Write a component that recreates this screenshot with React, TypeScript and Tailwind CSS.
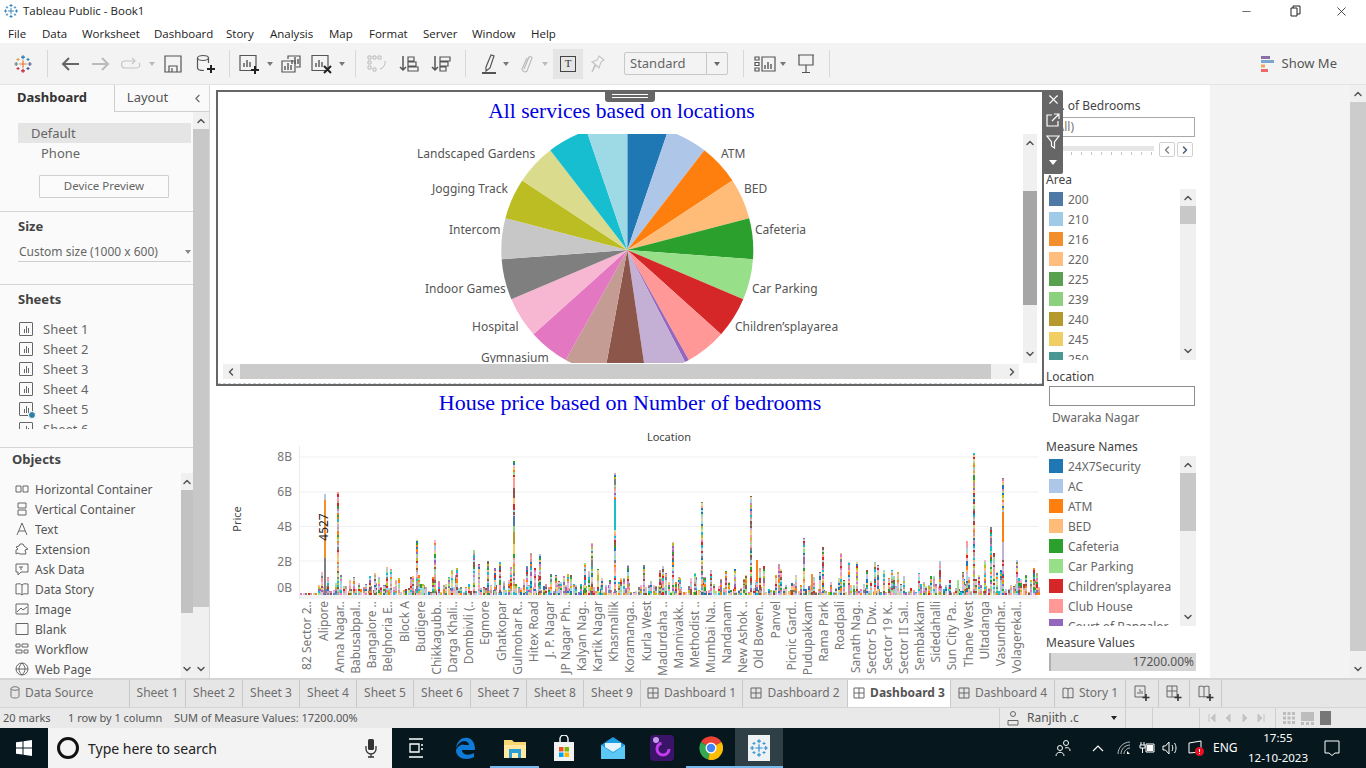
import React from "react";
import { ChevronUp, ChevronDown, ChevronLeft, ChevronRight, X, Minus } from "lucide-react";

const T20 = ["#1f77b4","#aec7e8","#ff7f0e","#ffbb78","#2ca02c","#98df8a","#d62728","#ff9896","#9467bd","#c5b0d5","#8c564b","#c49c94","#e377c2","#f7b6d2","#7f7f7f","#c7c7c7","#bcbd22","#dbdb8d","#17becf","#9edae5"];

function wedge(cx:number,cy:number,r:number,a0:number,a1:number){
  const p=(a:number)=>[cx+r*Math.sin(a*Math.PI/180),cy-r*Math.cos(a*Math.PI/180)];
  const [x0,y0]=p(a0),[x1,y1]=p(a1);
  return `M${cx} ${cy}L${x0} ${y0}A${r} ${r} 0 0 1 ${x1} ${y1}Z`;
}

function Pie(){
  let a=0; const big=(360-2)/19;
  const labels:[string,number,number][]=[["Landscaped Gardens",417,158],["ATM",721,158],["Jogging Track",432,193],["BED",744,193],["Intercom",449,234],["Cafeteria",755,234],["Indoor Games",425,293],["Car Parking",752,293],["Hospital",472,331],["Children’splayarea",735,331],["Gymnasium",481,362]];
  return (
    <svg width={805} height={229} viewBox="218 134 805 229" className="block shrink-0">
      {T20.map((c,i)=>{const d=i===8?2:big;const el=<path key={i} d={wedge(627.3,250,126,a,a+d)} fill={c}/>;a+=d;return el;})}
      {labels.map(([t,x,y])=><text key={t} x={x} y={y} fontSize={12} fill="#555" fontFamily="Noto Sans, sans-serif">{t}</text>)}
    </svg>
  );
}

const PEAKS:[number,number][]=[[324,494],[337,492],[321,572],[327,577],[340,575],[349,580],[369,576],[374,573],[386,567],[390,569],[395,580],[412,576],[416,540],[422,584],[434,540],[432,577],[451,570],[456,568],[473,550],[478,564],[487,561],[494,568],[499,562],[503,581],[510,567],[513,461],[526,566],[530,553],[534,568],[539,554],[550,574],[556,583],[567,574],[570,575],[584,563],[588,571],[591,543],[597,569],[601,578],[609,580],[614,473],[623,578],[627,565],[643,565],[659,570],[662,566],[665,573],[672,542],[679,578],[690,582],[694,573],[701,502],[704,577],[710,570],[725,571],[728,582],[734,569],[743,585],[750,496],[756,560],[759,568],[763,566],[778,564],[780,569],[785,585],[791,583],[803,538],[811,574],[819,572],[822,547],[840,553],[848,562],[856,562],[866,570],[874,562],[877,565],[883,570],[891,570],[897,572],[918,573],[923,582],[939,561],[949,580],[957,580],[962,572],[966,541],[973,453],[978,575],[984,560],[990,527],[993,553],[996,572],[1000,570],[1002,478],[1016,560],[1018,578],[1025,575],[1033,568],[1036,573]];

function buildBars(){
  let s=12345; const r=()=>{s=(s*1103515245+12345)&0x7fffffff;return s/0x7fffffff;};
  const rects:{x:number,y:number,h:number,c:string}[]=[];
  const BASE=594.5;
  const bar=(x:number,top:number)=>{
    let y=BASE;
    while(y>top){
      const h=Math.min(y-top,r()<0.2?3:2);
      rects.push({x,y:y-h,h,c:T20[Math.floor(r()*20)]});
      y-=h;
    }
  };
  for(let i=0;i<296;i++){
    const x=Math.round(300+i*2.5);
    const rr=r();
    if(x<318){bar(x,BASE-1.5);continue;}
    const h=rr<0.25?2+r()*2:rr<0.75?4+r()*7:9+r()*11;
    bar(x,BASE-h);
  }
  PEAKS.forEach(([x,t])=>bar(x,t));
  // long single-colour runs that stand out in the tall marks
  rects.push({x:324,y:500,h:58,c:"#f28e2b"},{x:324,y:558,h:36,c:"#7f7f7f"},{x:756,y:560,h:22,c:"#ff7f0e"},{x:811,y:574,h:16,c:"#f28e2b"},{x:1002,y:512,h:30,c:"#ff7f0e"},{x:1002,y:542,h:18,c:"#c5b0d5"},{x:957,y:580,h:14,c:"#98df8a"},{x:614,y:500,h:30,c:"#17becf"},{x:513,y:478,h:10,c:"#ff9896"},{x:513,y:488,h:10,c:"#8c564b"},{x:513,y:498,h:6,c:"#ffbb78"},{x:513,y:504,h:6,c:"#d62728"},{x:513,y:516,h:10,c:"#4e79a7"},{x:513,y:526,h:6,c:"#8cd17d"},{x:513,y:532,h:12,c:"#b6992d"},{x:513,y:544,h:10,c:"#f1ce63"});
  return rects;
}
const BARS=buildBars();

const AXIS:[string,number][]=[["82 Sector 2..",307],["Alipore",324],["Anna Nagar..",340],["Babusabpal..",356],["Bangalore ..",372],["Belghoria E..",388],["Block A",405],["Budigere",421],["Chikkagubb..",437],["Darga Khali..",453],["Dombivli (..",469],["Egmore",485],["Ghatkopar",502],["Gulmohar R..",518],["Hitex Road",534],["J. P. Nagar",550],["JP Nagar Ph..",566],["Kalyan Nag..",582],["Kartik Nagar",598],["Khasmallik",614],["Koramanga..",630],["Kurla West",647],["Madurdaha ..",663],["Mannivakk..",679],["Methodist ..",695],["Mumbai Na..",711],["Nandanam",727],["New Ashok ..",743],["Old Bowen..",759],["Panvel",776],["Picnic Gard..",792],["Pudupakkam",808],["Rama Park",824],["Roadpali",840],["Sanath Nag..",856],["Sector 5 Dw..",872],["Sector 19 K..",888],["Sector II Sal..",904],["Sembakkam",920],["Sidedahalli",936],["Sun City Pa..",952],["Thane West",969],["Ultadanga",985],["Vasundhar..",1001],["Volagerekal..",1017]];

function BarChart(){
  const F="Noto Sans, sans-serif";
  return (
    <svg width={828} height={258} viewBox="216 420 828 258" className="block">
      <text x={669} y={441} textAnchor="middle" fontSize={11} fill="#444" fontFamily={F}>Location</text>
      <rect x={299} y={595} width={739} height={4} fill="#f2f2f2"/>
      <rect x={299} y={446} width={1} height={153} fill="#ececec"/>
      {[456.5,491.5,526,560.5].map(y=><rect key={y} x={299} y={y} width={739} height={1} fill="#efefef"/>)}
      {[["8B",461],["6B",496],["4B",531],["2B",566],["0B",592]].map(([t,y])=><text key={t} x={292} y={y} textAnchor="end" fontSize={12} fill="#777" fontFamily={F}>{t}</text>)}
      <text transform="translate(241 519) rotate(-90)" textAnchor="middle" fontSize={11} fill="#444" fontFamily={F}>Price</text>
      {BARS.map((b,i)=><rect key={i} x={b.x} y={b.y} width={2} height={b.h} fill={b.c} shapeRendering="crispEdges"/>)}
      <text transform="translate(328 527) rotate(-90)" textAnchor="middle" fontSize={12} fill="#222" fontFamily={F}>4527</text>
      {AXIS.map(([t,x])=><text key={t} transform={`translate(${x+4} 601) rotate(-90)`} textAnchor="end" fontSize={12} fill="#777" fontFamily={F}>{t}</text>)}
    </svg>
  );
}

/* ---------- icons ---------- */
function TabLogo({size=22,mono}:{size?:number,mono?:string}){
  const cs=mono?[mono,mono,mono,mono,mono,mono,mono]:["#e8762c","#1f77b4","#c72035","#59879b","#5b6591","#eb912b","#1f447e"];
  const P=({x,y,r,c,w=1.3}:{x:number,y:number,r:number,c:string,w?:number})=><path d={`M${x-r} ${y}H${x+r}M${x} ${y-r}V${y+r}`} stroke={c} strokeWidth={w}/>;
  return <svg width={size} height={size} viewBox="0 0 22 22" className="shrink-0">
    <P x={11} y={11} r={4} c={cs[0]}/><P x={11} y={3.5} r={2.2} c={cs[1]}/><P x={11} y={18.5} r={2.2} c={cs[2]}/><P x={3.5} y={11} r={2.2} c={cs[3]}/><P x={18.5} y={11} r={2.2} c={cs[4]}/>
    <P x={5.5} y={6} r={1.7} c={cs[5]} w={1}/><P x={16.5} y={6} r={1.7} c={cs[1]} w={1}/><P x={5.5} y={16} r={1.7} c={cs[2]} w={1}/><P x={16.5} y={16} r={1.7} c={cs[6]} w={1}/>
  </svg>;
}
function Caret({cls="ml-0",c="#777"}:{cls?:string,c?:string}){return <svg width={6} height={4} viewBox="0 0 6 4" className={`shrink-0 ${cls}`}><path d="M0 0H6L3 4Z" fill={c}/></svg>;}
function Div({cls}:{cls:string}){return <div className={`w-px h-[27px] bg-[#d8d8d8] shrink-0 ${cls}`}/>;}
const S={fill:"none",stroke:"#555",strokeWidth:1.2};
function BarsMini({x,y}:{x:number,y:number}){return <path d={`M${x} ${y}v-4M${x+3} ${y}v-7M${x+6} ${y}v-5`} fill="none" stroke="#555" strokeWidth={1.4}/>;}
function I({w,h,cls,children}:{w:number,h:number,cls:string,children:React.ReactNode}){return <svg width={w} height={h} viewBox={`0 0 ${w} ${h}`} className={`shrink-0 ${cls}`}>{children}</svg>;}

function Toolbar(){
  return (
  <div className="h-[41px] bg-[#f3f3f3] flex items-center shrink-0 text-[#555]">
    <span className="ml-[13px] flex"><TabLogo size={20}/></span>
    <Div cls="ml-[14px]"/>
    <I w={20} h={16} cls="ml-[12px]"><path d="M19 8H3M9 2L3 8l6 6" fill="none" stroke="#666" strokeWidth={2}/></I>
    <I w={20} h={16} cls="ml-[11px]"><path d="M1 8h16M11 2l6 6-6 6" fill="none" stroke="#bbb" strokeWidth={2}/></I>
    <I w={22} h={14} cls="ml-[9px]"><path d="M14 4H5a3 3 0 0 0 0 7h12a3 3 0 0 0 2-5" fill="none" stroke="#c4c4c4" strokeWidth={1.2}/><path d="M12 1l3 3-3 3" fill="none" stroke="#c4c4c4" strokeWidth={1.2}/></I>
    <Caret cls="ml-[7px]" c="#bbb"/>
    <I w={18} h={18} cls="ml-[9px]"><path d="M1 1H17V17H1ZM5 17V11H13V17M8 13V17" {...S}/></I>
    <I w={20} h={20} cls="ml-[14px]"><ellipse cx={7} cy={4} rx={5.5} ry={2.5} {...S}/><path d="M1.5 4V14C1.5 15.5 4 16.5 8 16.5M12.5 4V9" {...S}/><path d="M15 11V19M11 15H19" stroke="#222" strokeWidth={2}/></I>
    <Div cls="ml-[13px]"/>
    <I w={22} h={20} cls="ml-[9px]"><path d="M1 1.5H17V16.5H1Z" {...S}/><BarsMini x={5} y={13}/><path d="M16 12V20M12 16H20" stroke="#222" strokeWidth={2}/></I>
    <Caret cls="ml-[6px]"/>
    <I w={20} h={18} cls="ml-[8px]"><path d="M7 4V1H19V12H15" {...S}/><path d="M1 6H14V17H1Z" {...S}/><BarsMini x={11} y={9}/><BarsMini x={4} y={15}/></I>
    <I w={22} h={20} cls="ml-[10px]"><path d="M1 1.5H17V16.5H1Z" {...S}/><BarsMini x={5} y={13}/><path d="M13 12l7 7M20 12l-7 7" stroke="#222" strokeWidth={2}/></I>
    <Caret cls="ml-[6px]"/>
    <Div cls="ml-[10px]"/>
    <I w={20} h={18} cls="ml-[11px]"><path d="M1 1h3v3H1ZM6 1h3v3H6ZM11 1h3v3h-3ZM1 6h3v3H1ZM1 11h3v3H1ZM6 13h3v3H6Z" fill="none" stroke="#bbb"/><path d="M18 6a7 7 0 0 1-5 8" fill="none" stroke="#bbb"/></I>
    <I w={20} h={18} cls="ml-[12px]"><path d="M4 1V15M1 12l3 3 3-3" fill="none" stroke="#555" strokeWidth={1.5}/><path d="M9 2H15V6H9ZM9 7H17V11H9ZM9 12H19V16H9Z" {...S}/></I>
    <I w={20} h={18} cls="ml-[12px]"><path d="M4 1V15M1 12l3 3 3-3" fill="none" stroke="#555" strokeWidth={1.5}/><path d="M9 2H19V6H9ZM9 7H17V11H9ZM9 12H15V16H9Z" {...S}/></I>
    <Div cls="ml-[14px]"/>
    <I w={16} h={22} cls="ml-[15px]"><path d="M5 14L10 2l3 1-4 12-4 3Z" {...S}/><rect x={1} y={19} width={14} height={2} fill="#555"/></I>
    <Caret cls="ml-[6px]"/>
    <I w={14} h={20} cls="ml-[11px]"><path d="M4 15L9 3a2 2 0 0 1 3 1L7 17a3 3 0 0 1-5-2l5-11" fill="none" stroke="#bbb" strokeWidth={1.2}/></I>
    <Caret cls="ml-[8px]" c="#bbb"/>
    <div className="ml-[5px] w-[30px] h-[30px] bg-[#e5e5e5] flex items-center justify-center shrink-0">
      <div className="w-[16px] h-[16px] border border-[#444] flex items-center justify-center text-[11px] leading-none text-[#333] font-['Liberation_Serif',serif]">T</div>
    </div>
    <I w={14} h={18} cls="ml-[8px]"><path d="M8 1l5 4-3 2-2 6-3-3-4 7 3-8-3-2 5-2Z" fill="none" stroke="#c4c4c4" strokeWidth={1.1}/></I>
    <div className="ml-[19px] w-[104px] h-[23px] border border-[#c8c8c8] rounded-[2px] flex items-center shrink-0 bg-[#f3f3f3]">
      <span className="flex-1 pl-[5px] text-[13px] text-[#666]">Standard</span>
      <span className="w-[21px] h-full border-l border-[#c8c8c8] flex items-center justify-center"><Caret c="#666"/></span>
    </div>
    <Div cls="ml-[15px]"/>
    <I w={22} h={18} cls="ml-[10px]"><path d="M1 2h4v3H1ZM1 7.500h4v3H1ZM1 13h4v3H1ZM8 2H21V16H8Z" {...S}/><BarsMini x={11} y={14}/></I>
    <Caret cls="ml-[4px]"/>
    <I w={18} h={20} cls="ml-[11px]"><path d="M1 1H17M2 1V11H16V1M9 11V18M5 18.500H13" {...S}/></I>
    <Div cls="ml-[14px]"/>
    <I w={13} h={18} cls="ml-auto"><rect x={0} y={1} width={9} height={3} fill="#8a6fa8"/><rect x={0} y={5} width={13} height={3} fill="#7aa6d0"/><rect x={0} y={9.500} width={4} height={3} fill="#f5a35c"/><rect x={0} y={14} width={7} height={3} fill="#ee6a6a"/></I>
    <span className="ml-[8px] mr-[29px] text-[13px] text-[#555]">Show Me</span>
  </div>);
}

function ScrollV({top,bottom,cls,thumb}:{top:string,bottom:string,cls:string,thumb:string}){
  return <div className={`flex flex-col bg-[#f0f0f0] shrink-0 ${cls}`}>
    <div className={`flex items-start justify-center ${top}`}><ChevronUp size={12} strokeWidth={3} color="#555" className="mt-[3px]"/></div>
    <div className={`${thumb}`}/>
    <div className={`flex-1 flex items-end justify-center ${bottom}`}><ChevronDown size={12} strokeWidth={3} color="#555" className="mb-[3px]"/></div>
  </div>;
}

function SheetIcon({badge}:{badge?:boolean}){return <span className="relative w-[14px] h-[14px] border border-[#666] rounded-[1px] shrink-0 flex items-end justify-center gap-px pb-[2px]">
  <i className="w-px h-[4px] bg-[#666]"/><i className="w-px h-[7px] bg-[#666]"/><i className="w-px h-[5px] bg-[#666]"/>
  {badge&&<i className="absolute -right-[4px] -bottom-[4px] w-[8px] h-[8px] rounded-full bg-[#2e7ea6] border border-white"/>}
</span>;}

const OB={fill:"none",stroke:"#666",strokeWidth:1};
const OBJ:[string,React.ReactNode][]=[
["Horizontal Container",<path d="M1 4h5v6H1ZM8 4h5v6H8Z" {...OB}/>],
["Vertical Container",<path d="M3 1h8v5H3ZM3 8h8v5H3Z" {...OB}/>],
["Text",<path d="M2 13L7 1l5 12M4 9h6" {...OB}/>],
["Extension",<path d="M1 12V8l2-1-2-2 3-1 1-2h3l1 2 4 3-3 1 1 4H5l-2-1Z" {...OB}/>],
["Ask Data",<path d="M1 2H13V10H6L3 13V10H1ZM4 5H8M6 5V8" {...OB}/>],
["Data Story",<path d="M7 3C5 1 3 2 1 2V12C3 12 5 11 7 13 9 11 11 12 13 12V2C11 2 9 1 7 3ZM7 3V13" {...OB}/>],
["Image",<path d="M1 2H13V12H1ZM2 10L6 6 8 8 12 5" {...OB}/>],
["Blank",<path d="M1 1.500H13V12.500H1Z" {...OB}/>],
["Workflow",<path d="M1 2h4v3H1ZM7 2h6v3H7ZM1 8h6v3H1ZM9 8h4v3H9Z" {...OB}/>],
["Web Page",<><circle cx={7} cy={7} r={6} {...OB}/><path d="M1 7H13M7 1C3 5 3 9 7 13 11 9 11 5 7 1" {...OB}/></>],
];

function LeftPanel(){
  return <div className="w-[210px] shrink-0 flex flex-col bg-[#fafafa] border-r border-[#d8d8d8] text-[#555]">
    <div className="h-[27px] flex shrink-0">
      <div className="w-[114px] flex items-center justify-center pr-[10px] pb-[2px] font-bold text-[13px] text-[#333]">Dashboard</div>
      <div className="w-[72px] flex items-center justify-center pr-[6px] pb-[1px] border-l border-b border-[#cfcfcf] text-[13px] text-[#555]">Layout</div>
      <div className="flex-1 flex items-center justify-center border-b border-[#cfcfcf]"><ChevronLeft size={13} color="#666"/></div>
    </div>
    <div className="flex-1 flex min-h-0">
      <div className="w-[193px] flex flex-col shrink-0">
        <div className="mt-[11px] h-[20px] ml-[18px] mr-[2px] pl-[13px] pt-[2px] bg-[#e5e5e5] flex items-center text-[13px] text-[#666]">Default</div>
        <div className="h-[20px] pl-[41px] pt-[2px] flex items-center text-[13px] text-[#666]">Phone</div>
        <div className="mt-[12px] ml-[39px] w-[130px] h-[23px] border border-[#cfcfcf] rounded-[1px] flex items-center justify-center pb-[1px] text-[11.5px] text-[#666] bg-[#fbfbfb]">Device Preview</div>
        <div className="mt-[13px] border-t border-[#d5d5d5]"/>
        <div className="h-[28px] pl-[18px] pt-[2px] flex items-center font-bold text-[13px] text-[#444]">Size</div>
        <div className="h-[22px] ml-[18px] mr-[2px] pt-[2px] border-b border-[#cfcfcf] flex items-center justify-between text-[12px] text-[#666]"><span className="pl-[1px]">Custom size (1000 x 600)</span><Caret c="#888"/></div>
        <div className="mt-[22px] border-t border-[#d5d5d5]"/>
        <div className="h-[29px] pl-[18px] flex items-center font-bold text-[13px] text-[#444]">Sheets</div>
        <div className="mt-[5px] h-[110px] overflow-hidden">
          {[1,2,3,4,5,6].map(n=><div key={n} className="h-[20px] pl-[19px] flex items-center gap-[10px] text-[13px] text-[#666]"><SheetIcon badge={n===5}/><span className="pt-[2px]">Sheet {n}</span></div>)}
        </div>
        <div className="mt-[18px] border-t border-[#d5d5d5]"/>
        <div className="h-[22px] pl-[12px] pt-[2px] flex items-center font-bold text-[13px] text-[#444]">Objects</div>
        <div className="flex-1 flex min-h-0">
          <div className="flex-1 pt-[9px] overflow-hidden">
            {OBJ.map(([t,ic])=><div key={t} className="h-[20px] pl-[15px] flex items-center gap-[6px] text-[12px] text-[#555]"><svg width={14} height={14} viewBox="0 0 14 14" className="shrink-0">{ic}</svg><span className="pt-[2px]">{t}</span></div>)}
          </div>
          <ScrollV cls="w-[12px] mt-[3px]" top="h-[17px]" thumb="h-[123px] bg-[#c2c2c2]" bottom=""/>
        </div>
      </div>
      <ScrollV cls="w-[16px]" top="h-[17px]" thumb="h-[478px] bg-[#c8c8c8]" bottom=""/>
    </div>
  </div>;
}

const H="text-[12px] leading-[16px] text-[#444] h-[16px] whitespace-nowrap";
function LegendItem({c,t}:{c:string,t:string}){return <div className="h-[20px] flex items-center pl-[3px] text-[12px] text-[#666] whitespace-nowrap"><i className="w-[14px] h-[14px] shrink-0" style={{background:c}}/><span className="ml-[5px] pt-[2px]">{t}</span></div>;}

function RightLegends(){
  const area:[string,string][]=[["#4e79a7","200"],["#a0cbe8","210"],["#f28e2b","216"],["#ffbe7d","220"],["#59a14f","225"],["#8cd17d","239"],["#b6992d","240"],["#f1ce63","245"],["#499894","250"]];
  const mn:[string,string][]=[["#1f77b4","24X7Security"],["#aec7e8","AC"],["#ff7f0e","ATM"],["#ffbb78","BED"],["#2ca02c","Cafeteria"],["#98df8a","Car Parking"],["#d62728","Children’splayarea"],["#ff9896","Club House"],["#9467bd","Court of Bangalor"]];
  return <div className="flex-1 pl-[2px] pt-[11px] flex flex-col">
    <div className={`${H} -ml-[1px] pt-[2px] leading-[14px]`}>No. of Bedrooms</div>
    <div className="ml-[3px] mt-[5px] w-[146px] h-[20px] border border-[#a8a8a8] flex items-center pl-[3px] text-[12px] text-[#777]">(All)</div>
    <div className="ml-[3px] mt-[5px] flex w-[146px] h-[16px]">
      <div className="w-[105px] pt-[4px] flex flex-col">
        <div className="h-[5px] bg-[#e6e6e6]"/>
        <div className="mt-[1px] h-[3px] flex justify-between px-[2px]">{[0,1,2,3,4,5,6,7,8,9,10].map(i=><i key={i} className="w-px h-[3px] bg-[#c4c4c4]"/>)}</div>
      </div>
      <div className="ml-[5px] w-[16px] h-[15px] border border-[#d0d0d0] rounded-[2px] flex items-center justify-center"><ChevronLeft size={12} strokeWidth={3} color="#888"/></div>
      <div className="ml-[2px] w-[16px] h-[15px] border border-[#d0d0d0] rounded-[2px] flex items-center justify-center"><ChevronRight size={12} strokeWidth={3} color="#4a5a78"/></div>
    </div>
    <div className={`${H} mt-[14px]`}>Area</div>
    <div className="mt-[1px] h-[171px] flex overflow-hidden">
      <div className="w-[134px] overflow-hidden">{area.map(([c,t])=><LegendItem key={t} c={c} t={t}/>)}</div>
      <ScrollV cls="w-[16px]" top="h-[17px]" thumb="h-[18px] bg-[#c8c8c8]" bottom=""/>
    </div>
    <div className={`${H} mt-[9px]`}>Location</div>
    <div className="ml-[3px] mt-[1px] w-[146px] h-[20px] border border-[#8a8f94] bg-white"/>
    <div className="mt-[2px] pl-[6px] h-[20px] flex items-center text-[12px] text-[#666]">Dwaraka Nagar</div>
    <div className={`${H} mt-[11px]`}>Measure Names</div>
    <div className="mt-[1px] h-[170px] flex overflow-hidden">
      <div className="w-[134px] overflow-hidden">{mn.map(([c,t])=><LegendItem key={t} c={c} t={t}/>)}</div>
      <ScrollV cls="w-[16px]" top="h-[17px]" thumb="h-[58px] bg-[#c8c8c8]" bottom=""/>
    </div>
    <div className={`${H} mt-[9px]`}>Measure Values</div>
    <div className="ml-[3px] mt-[2px] w-[147px] h-[18px] bg-[#d6d6d6] border-l-2 border-[#b0b0b0] flex items-center justify-end pr-[2px] text-[12px] text-[#555]">17200.00%</div>
  </div>;
}

function Main(){
  return <div className="w-[1000px] shrink-0 bg-white flex relative">
    <div className="w-[834px] pl-[6px] pt-[5px] flex flex-col shrink-0">
      <div className="relative w-[828px] h-[296px] border-2 border-[#666] flex flex-col">
        <div className="absolute left-[387px] -top-[2px] w-[50px] h-[12px] bg-[#666] rounded-b-[3px] flex flex-col items-center justify-center gap-[2px]"><i className="w-[36px] h-px bg-white"/><i className="w-[36px] h-px bg-white"/></div>
        <div className="h-[42px] flex items-center justify-center pb-[4px] pr-[17px] text-[21.5px] text-[#0000e0] font-['Liberation_Serif',serif] whitespace-nowrap">All services based on locations</div>
        <div className="flex">
          <Pie/>
          <div className="w-[14px] h-[229px] bg-[#f0f0f0] flex flex-col shrink-0">
            <div className="h-[57px] flex justify-center pt-[3px]"><ChevronUp size={12} strokeWidth={3} color="#555"/></div>
            <div className="h-[114px] bg-[#a6a6a6]"/>
            <div className="flex-1 flex items-end justify-center pb-[3px]"><ChevronDown size={12} strokeWidth={3} color="#555"/></div>
          </div>
        </div>
        <div className="mt-px ml-[5px] w-[796px] h-[15px] bg-[#f0f0f0] flex items-center">
          <ChevronLeft size={12} strokeWidth={3} color="#555" className="ml-[2px]"/>
          <div className="ml-[3px] w-[751px] h-full bg-[#cbcbcb]"/>
          <ChevronRight size={12} strokeWidth={3} color="#555" className="ml-[15px]"/>
        </div>
        <div className="mt-[4px] border-b border-dashed border-[#c8d0d8]"/>
      </div>
      <div className="h-[34px] flex items-center justify-center pb-[2px] text-[22px] text-[#0000e0] font-['Liberation_Serif',serif] whitespace-nowrap">House price based on Number of bedrooms</div>
      <BarChart/>
    </div>
    <RightLegends/>
    <div className="absolute left-[833px] top-[5px] w-[20px] h-[84px] bg-[#666] rounded-[2px] flex flex-col items-center text-white">
      <X size={15} strokeWidth={1.8} className="mt-[2px]"/>
      <svg width={14} height={14} viewBox="0 0 14 14" className="mt-[6px]"><path d="M6 2H1V13H12V8M8 1H13V6M13 1L6 8" fill="none" stroke="#fff" strokeWidth={1.2}/></svg>
      <svg width={14} height={14} viewBox="0 0 14 14" className="mt-[8px]"><path d="M1 1H13L8.500 7V13L5.500 11V7Z" fill="none" stroke="#fff" strokeWidth={1.2}/></svg>
      <svg width={8} height={5} viewBox="0 0 8 5" className="mt-[11px]"><path d="M0 0H8L4 5Z" fill="#fff"/></svg>
    </div>
  </div>;
}

function Tab({w,children,active,left}:{w:string,children:React.ReactNode,active?:boolean,left?:boolean}){
  return <div className={`${w} h-full shrink-0 flex items-center ${left?"justify-start pl-[10px]":"justify-center"} gap-[5px] pb-[2px] border-r border-[#c9c9c9] text-[12px] whitespace-nowrap ${active?"bg-white font-bold text-[#555]":"text-[#6e6e6e]"}`}>{children}</div>;
}
function DashIcon(){return <svg width={12} height={12} viewBox="0 0 12 12" className="shrink-0"><path d="M1 1H11V11H1ZM1 6H11M6 1V11" fill="none" stroke="#666"/></svg>;}
function StoryIcon(){return <svg width={12} height={12} viewBox="0 0 12 12" className="shrink-0"><path d="M6 2C5 1 2 1 1 1.500V11C2 10.500 5 10.500 6 11 7 10.500 10 10.500 11 11V1.500C10 1 7 1 6 2ZM6 2V11" fill="none" stroke="#666"/></svg>;}

function Tabs(){
  return <div className="h-[30px] shrink-0 bg-[#e6e6e6] border-t-2 border-[#d4d4d4] flex border-b border-b-[#d4d4d4]">
    <Tab w="w-[130px]" left><svg width={10} height={13} viewBox="0 0 10 13"><ellipse cx={5} cy={2.500} rx={4} ry={1.800} fill="none" stroke="#777"/><path d="M1 2.500V10.500C1 12.500 9 12.500 9 10.500V2.500" fill="none" stroke="#777"/></svg>Data Source</Tab>
    {["w-[56px]","w-[57px]","w-[57px]","w-[57px]","w-[57px]","w-[57px]","w-[56px]","w-[57px]","w-[57px]"].map((w,i)=><Tab key={i} w={w}>Sheet {i+1}</Tab>)}
    <Tab w="w-[102px]"><DashIcon/>Dashboard 1</Tab>
    <Tab w="w-[105px]"><DashIcon/>Dashboard 2</Tab>
    <Tab w="w-[103px]" active><DashIcon/>Dashboard 3</Tab>
    <Tab w="w-[104px]"><DashIcon/>Dashboard 4</Tab>
    <Tab w="w-[71px]"><StoryIcon/>Story 1</Tab>
    <Tab w="w-[33px]"><svg width={16} height={16} viewBox="0 0 16 16"><path d="M1 1H11V12H1Z" fill="none" stroke="#666"/><path d="M4 9V7M6 9V4M8 9V6" stroke="#666"/><path d="M12 9V16M8.500 12.500H15.500" stroke="#333" strokeWidth={1.6}/></svg></Tab>
    <Tab w="w-[31px]"><svg width={16} height={16} viewBox="0 0 16 16"><path d="M1 1H11V12H1ZM1 6H11M6 1V12" fill="none" stroke="#666"/><path d="M12 9V16M8.500 12.500H15.500" stroke="#333" strokeWidth={1.6}/></svg></Tab>
    <Tab w="w-[32px]"><svg width={16} height={16} viewBox="0 0 16 16"><path d="M6 2C5 1 2 1 1 1.500V12C2 11.500 5 11.500 6 12 7 11.500 10 11.500 11 12V1.500C10 1 7 1 6 2ZM6 2V12" fill="none" stroke="#666"/><path d="M12 9V16M8.500 12.500H15.500" stroke="#333" strokeWidth={1.6}/></svg></Tab>
  </div>;
}

function Status(){
  return <div className="h-[20px] shrink-0 bg-[#e9e9e9] flex items-center text-[11px] text-[#555] whitespace-nowrap">
    <span className="w-[68px] pl-[3px] shrink-0">20 marks</span>
    <span className="w-[106px] shrink-0">1 row by 1 column</span>
    <span className="w-[825px] shrink-0">SUM of Measure Values: 17200.00%</span>
    <div className="w-[127px] h-full shrink-0 border-l border-r border-[#cfcfcf] flex items-center text-[12px] pl-[7px]">
      <svg width={12} height={15} viewBox="0 0 12 15"><circle cx={6} cy={3} r={2.500} fill="none" stroke="#666"/><path d="M1 14V9.500H11V14Z" fill="none" stroke="#666"/></svg>
      <span className="ml-[8px]">Ranjith .c</span><Caret cls="ml-auto mr-[8px]" c="#222"/>
    </div>
    <div className="w-[27px] h-full border-r border-[#cfcfcf] shrink-0"/>
    <div className="w-[47px] h-full border-r border-[#cfcfcf] shrink-0"/>
    <div className="w-[76px] h-full border-r border-[#cfcfcf] shrink-0 flex items-center justify-center gap-[8px]">
      <svg width={60} height={9} viewBox="0 0 60 9"><path d="M1 0V8M7 0L3 4l4 4ZM22 0L18 4l4 4ZM35 0l4 4-4 4ZM50 0l4 4-4 4ZM56 0V8" fill="#c4c4c4" stroke="#c4c4c4"/></svg>
    </div>
    <div className="flex-1 flex items-center gap-[6px] pl-[7px]">
      <svg width={12} height={12} viewBox="0 0 12 12"><path d="M0 0h3v3H0ZM4.500 0h3v3h-3ZM9 0h3v3H9ZM0 4.500h3v3H0ZM4.500 4.500h3v3h-3ZM9 4.500h3v3H9ZM0 9h3v3H0ZM4.500 9h3v3h-3ZM9 9h3v3H9Z" fill="#bdbdbd"/></svg>
      <svg width={13} height={13} viewBox="0 0 13 13"><rect width={13} height={9} fill="#bdbdbd"/><path d="M0 10h3v3H0ZM5 10h3v3H5ZM10 10h3v3h-3Z" fill="#bdbdbd"/></svg>
      <div className="w-[11px] h-[14px] bg-[#777]"/>
    </div>
  </div>;
}

function Taskbar(){
  const Btn=({w,active,under,children}:{w:string,active?:boolean,under?:boolean,children:React.ReactNode})=><div className={`${w} h-full shrink-0 flex items-center justify-center relative ${active?"bg-[#2e3f45]":""}`}>{children}{under&&<i className="absolute left-0 right-0 bottom-0 h-[2px] bg-[#76b9ed]"/>}</div>;
  return <div className="h-[40px] shrink-0 bg-[#06181e] flex items-center text-white">
    <Btn w="w-[48px]"><svg width={16} height={16} viewBox="0 0 16 16"><path d="M0 2.300L6.500 1.400V7.500H0ZM7.500 1.300L16 0V7.500H7.500ZM0 8.500H6.500V14.600L0 13.700ZM7.500 8.500H16V16L7.500 14.700Z" fill="#fff"/></svg></Btn>
    <div className="w-[344px] h-full bg-[#f3f3f3] flex items-center shrink-0">
      <span className="ml-[9px] w-[22px] h-[22px] rounded-full border-[3px] border-[#111] bg-[#f3f3f3]"/>
      <span className="ml-[9px] text-[14px] text-[#222]">Type here to search</span>
      <svg width={12} height={20} viewBox="0 0 12 20" className="ml-auto mr-[15px]"><rect x={3} y={1} width={6} height={11} rx={1.500} fill="#333"/><path d="M1 8V11A5 5 0 0 0 11 11V8M6 16V19M3 19H9" fill="none" stroke="#333" strokeWidth={1.3}/></svg>
    </div>
    <Btn w="w-[48px]"><svg width={16} height={20} viewBox="0 0 16 20"><path d="M1 1H15M1 19H15M2 6H11V14H2Z" fill="none" stroke="#fff" strokeWidth={1.3}/><path d="M14 6v2M14 10v2" stroke="#fff" strokeWidth={1.5}/></svg></Btn>
    <Btn w="w-[50px]"><svg width={22} height={24} viewBox="0 0 22 24"><path d="M2 12C3 4 9 1 14 2 19 3 21 8 21 14H8C8 19 15 20 20 17V21C13 25 2 23 2 14 4 9 8 8 11 9H15C15 7 13 5 10 5 7 5 4 8 2 12Z" fill="#0f7bd6"/></svg></Btn>
    <Btn w="w-[49px]" under><svg width={22} height={20} viewBox="0 0 22 20"><path d="M0 2H8L10 4H22V20H0Z" fill="#f7d774"/><path d="M0 7H22V20H0Z" fill="#ffe9a0"/><rect x={5} y={11} width={12} height={9} fill="#2a9fd8"/><rect x={8} y={15} width={6} height={5} fill="#fff0b8"/></svg></Btn>
    <Btn w="w-[49px]"><svg width={22} height={26} viewBox="0 0 22 26"><path d="M7 7V4A4 4 0 0 1 15 4V7" fill="none" stroke="#fff" strokeWidth={1.4}/><rect x={1} y={7} width={20} height={19} fill="#f2f2f2"/><rect x={6} y={12} width={4.500} height={4.500} fill="#f25022"/><rect x={11.500} y={12} width={4.500} height={4.500} fill="#7fba00"/><rect x={6} y={17.500} width={4.500} height={4.500} fill="#00a4ef"/><rect x={11.500} y={17.500} width={4.500} height={4.500} fill="#ffb900"/></svg></Btn>
    <Btn w="w-[49px]"><svg width={26} height={24} viewBox="0 0 26 24"><path d="M1 9L13 1l12 8V23H1Z" fill="#1c9de4"/><path d="M1 9L13 17 25 9V23H1Z" fill="#5cc8f5"/><path d="M5 7H21V11L13 16 5 11Z" fill="#e6f4fb"/></svg></Btn>
    <Btn w="w-[49px]"><svg width={24} height={26} viewBox="0 0 24 26"><rect width={24} height={26} rx={4} fill="#3a1466"/><circle cx={13} cy={14} r={6} fill="none" stroke="#c23cf0" strokeWidth={3} strokeDasharray="26 12"/><circle cx={6} cy={5} r={3} fill="#c69bf0"/></svg></Btn>
    <Btn w="w-[49px]" under><svg width={24} height={24} viewBox="0 0 24 24"><path d="M12 12L2 6A12 12 0 0 1 22.400 6Z" fill="#ea4335"/><path d="M12 12L2 6A12 12 0 0 0 9 23.600Z" fill="#34a853"/><path d="M12 12L9 23.600A12 12 0 0 0 22.400 6Z" fill="#fbbc05"/><circle cx={12} cy={12} r={5.500} fill="#fff"/><circle cx={12} cy={12} r={4.200} fill="#4285f4"/></svg></Btn>
    <Btn w="w-[48px]" active under><div className="w-[22px] h-[26px] bg-[#eef2f5] flex items-center justify-center"><TabLogo size={20} mono="#2f8fd0"/></div></Btn>
    <div className="w-[272px] shrink-0"/>
    <svg width={16} height={18} viewBox="0 0 16 18" className="shrink-0"><circle cx={11} cy={4} r={2.500} fill="none" stroke="#fff"/><circle cx={5} cy={9} r={2.500} fill="none" stroke="#fff"/><path d="M1 17C1 12 9 12 9 17M10 9C13 8 15 9 15 12" fill="none" stroke="#fff"/></svg>
    <svg width={12} height={7} viewBox="0 0 12 7" className="ml-[21px] shrink-0"><path d="M1 6L6 1l5 5" fill="none" stroke="#fff" strokeWidth={1.2}/></svg>
    <svg width={14} height={14} viewBox="0 0 14 14" className="ml-[13px] shrink-0"><path d="M1 13C1 7 6 1 13 1M4 13C4 8 8 4 13 4M7 13C7 10 10 7 13 7" fill="none" stroke="#bbb"/><path d="M13 13L10 10V13Z" fill="#fff"/></svg>
    <svg width={16} height={12} viewBox="0 0 16 12" className="ml-[8px] shrink-0"><path d="M5 0V3M2 0V3M1 3H6V6H1ZM3.500 6V11" stroke="#fff" fill="none"/><path d="M7 2H15V10H7Z" fill="none" stroke="#fff"/><rect x={8} y={3} width={6} height={6} fill="#fff"/></svg>
    <svg width={16} height={14} viewBox="0 0 16 14" className="ml-[7px] shrink-0"><path d="M1 5H3.500L7 1V13L3.500 9H1ZM10 4C11 6 11 8 10 10M12.500 2C14.500 5 14.500 9 12.500 12" fill="none" stroke="#fff"/></svg>
    <svg width={16} height={16} viewBox="0 0 16 16" className="ml-[10px] shrink-0"><path d="M1 3L13 1V12L1 13Z" fill="none" stroke="#fff"/><circle cx={11.500} cy={11.500} r={4.500} fill="#e81123"/><path d="M11.500 9V12M11.500 13V14" stroke="#fff"/></svg>
    <span className="ml-[9px] text-[12px] w-[30px] shrink-0">ENG</span>
    <div className="w-[70px] shrink-0 flex flex-col items-center text-[11.5px] leading-[20px]"><span>17:55</span><span>12-10-2023</span></div>
    <svg width={16} height={16} viewBox="0 0 16 16" className="ml-[11px] shrink-0"><path d="M1 1H15V13H11L8 15.500 5 13H1Z" fill="none" stroke="#fff"/></svg>
  </div>;
}

const MENU:[string,string][]=[["File","w-[34px]"],["Data","w-[40px]"],["Worksheet","w-[72px]"],["Dashboard","w-[72px]"],["Story","w-[44px]"],["Analysis","w-[59px]"],["Map","w-[40px]"],["Format","w-[54px]"],["Server","w-[49px]"],["Window","w-[59px]"],["Help","w-[30px]"]];

export default function App(){
  return <div className="w-[1366px] h-[768px] flex flex-col overflow-hidden bg-white font-['Noto_Sans',sans-serif]">
    <div className="h-[22px] shrink-0 flex items-center font-['Open_Sans',sans-serif]">
      <span className="ml-[3px] flex"><TabLogo size={16} mono="#2f7fb8"/></span>
      <span className="ml-[4px] text-[11.5px] text-[#222]">Tableau Public - Book1</span>
      <Minus size={13} color="#222" strokeWidth={1.2} className="ml-auto"/>
      <svg width={11} height={12} viewBox="0 0 11 12" className="ml-[37px]"><path d="M1 3H7V11H1ZM3 3V1H10V9H7" fill="none" stroke="#222"/></svg>
      <X size={15} color="#222" strokeWidth={1.3} className="ml-[33px] mr-[17px]"/>
    </div>
    <div className="h-[21px] shrink-0 flex items-center pl-[8px] pt-[2px] text-[11.5px] text-[#222] font-['Open_Sans',sans-serif]">
      {MENU.map(([t,w])=><span key={t} className={`${w} shrink-0`}>{t}</span>)}
    </div>
    <Toolbar/>
    <div className="flex-1 flex min-h-0 bg-[#f3f3f3] border-t border-[#e4e4e4]">
      <LeftPanel/>
      <Main/>
      <div className="flex-1"/>
      <ScrollV cls="w-[16px]" top="h-[17px]" thumb="h-[549px] bg-[#cccccc]" bottom=""/>
    </div>
    <Tabs/>
    <Status/>
    <Taskbar/>
  </div>;
}
